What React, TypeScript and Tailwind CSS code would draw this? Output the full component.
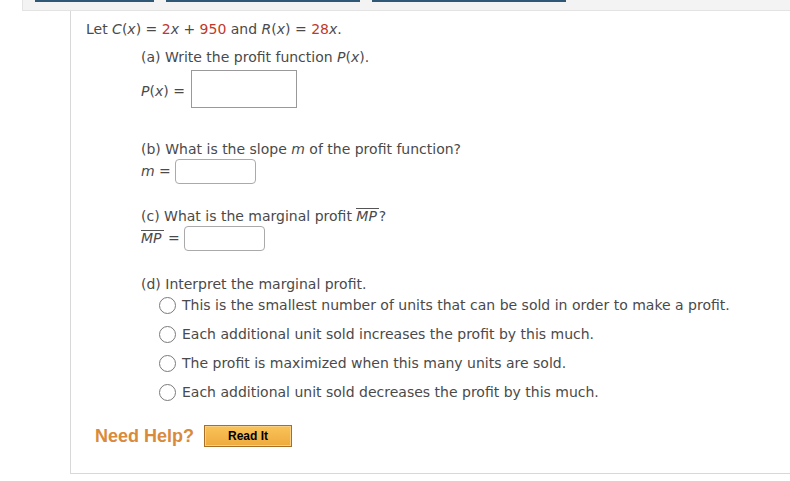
import React from "react";

const V = ({ children }: { children: React.ReactNode }) => <i>{children}</i>;
const R = ({ children }: { children: React.ReactNode }) => <span className="text-[#c0392b]">{children}</span>;
const MP = () => (
  <span className="italic border-t border-[#555] leading-[13px] inline-block pt-[1px] pr-[2px]">MP</span>
);

const Radio = ({ label }: { label: string }) => (
  <div className="flex items-center h-[20px]">
    <span className="w-[17px] h-[17px] rounded-full border-[1.5px] border-[#7a7a7a] bg-white mr-[6px] shrink-0" />
    <span>{label}</span>
  </div>
);

export default function App() {
  return (
    <div
      className="w-[790px] h-[481px] bg-white overflow-hidden text-[14px] text-[#4a4a4a]"
      style={{ fontFamily: '"DejaVu Sans", Verdana, sans-serif' }}
    >
      <div className="ml-[22px] h-[11px] bg-[#f3f3f3] border-l border-b border-[#e3e3e3] flex gap-[12px] pl-[12px]">
        <div className="w-[119px] h-[2px] bg-[#2e5875]" />
        <div className="w-[194px] h-[2px] bg-[#2e5875]" />
        <div className="w-[194px] h-[2px] bg-[#2e5875]" />
      </div>
      <div className="ml-[70px] h-[463px] border-l border-b border-[#d8d8d8] pl-[15px] pt-[9px]">
        <div className="h-[18px] leading-[18px]">
          Let <V>C</V>(<V>x</V>) = <R>2</R><V>x</V> + <R>950</R> and <V>R</V>(<V>x</V>) = <R>28</R><V>x</V>.
        </div>
        <div className="ml-[55px]">
          <div className="mt-[10px] h-[18px] leading-[18px]">
            (a) Write the profit function <V>P</V>(<V>x</V>).
          </div>
          <div className="mt-[4px] flex items-center">
            <span className="pt-[4px]">
              <V>P</V>(<V>x</V>) =
            </span>
            <div className="ml-[6px] w-[106px] h-[38px] border border-[#999] bg-white" />
          </div>
          <div className="mt-[32px] h-[18px] leading-[18px]">
            (b) What is the slope <V>m</V> of the profit function?
          </div>
          <div className="mt-[1px] flex items-center">
            <span>
              <V>m</V> =
            </span>
            <div className="ml-[4px] w-[81px] h-[25px] border border-[#aaa] rounded-[4px] bg-white" />
          </div>
          <div className="mt-[23px] h-[18px] leading-[18px]">
            (c) What is the marginal profit <MP />?
          </div>
          <div className="mt-[1px] flex items-center">
            <span>
              <MP /> =
            </span>
            <div className="ml-[4px] w-[81px] h-[25px] border border-[#aaa] rounded-[4px] bg-white" />
          </div>
          <div className="mt-[24px] h-[18px] leading-[18px]">(d) Interpret the marginal profit.</div>
          <div className="ml-[18px] mt-[2px] flex flex-col gap-[9px]">
            <Radio label="This is the smallest number of units that can be sold in order to make a profit." />
            <Radio label="Each additional unit sold increases the profit by this much." />
            <Radio label="The profit is maximized when this many units are sold." />
            <Radio label="Each additional unit sold decreases the profit by this much." />
          </div>
        </div>
        <div className="mt-[21px] ml-[9px] flex items-center">
          <span
            className="text-[18px] font-bold text-[#d98a3a]"
            style={{ fontFamily: '"Liberation Sans", Arial, sans-serif' }}
          >
            Need Help?
          </span>
          <button
            className="ml-[10px] -mt-[2px] w-[88px] h-[22px] border border-[#a86e24] bg-gradient-to-b from-[#f9c35a] to-[#efaa3c] text-[12px] font-bold text-black shadow-[inset_0_0_0_1px_#fad184]"
            style={{ fontFamily: '"Liberation Sans", Arial, sans-serif' }}
          >
            Read It
          </button>
        </div>
      </div>
    </div>
  );
}
